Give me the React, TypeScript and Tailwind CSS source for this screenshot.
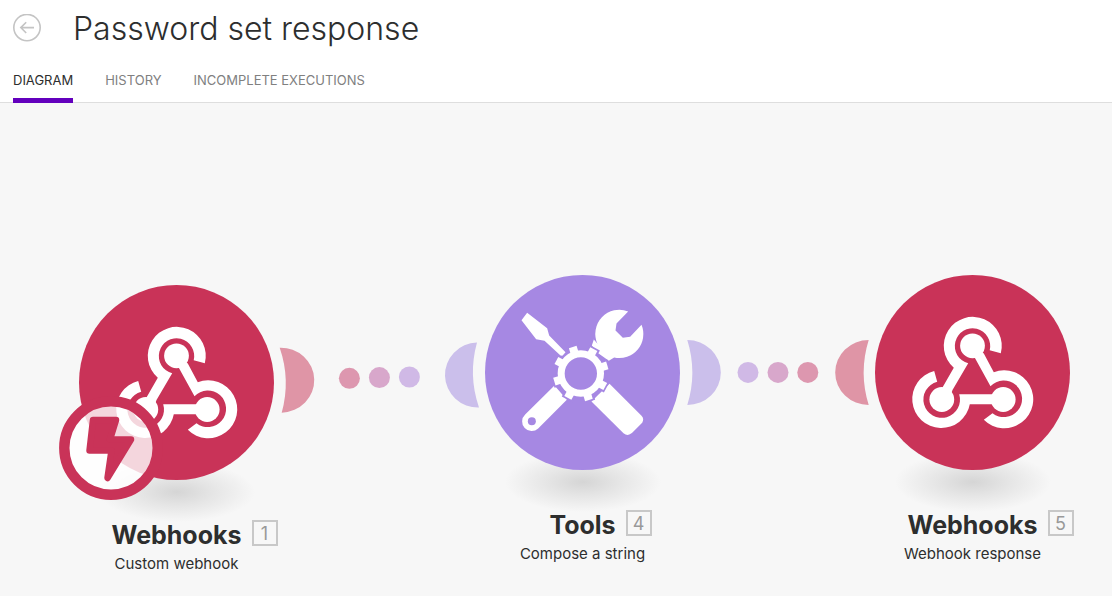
import type { ReactNode } from "react";

const tabs = ["Diagram", "History", "Incomplete executions"];

function WebhookIcon() {
  return (
    <svg viewBox="-97.5 -97.5 195 195" className="block size-full" aria-hidden="true">
      <circle r="97.5" fill="#c93358" />
      <g fill="#fff">
        <circle cx="0" cy="-26.7" r="12.4" />
        <circle cx="-30.7" cy="27" r="12.4" />
        <circle cx="30.7" cy="27" r="12.4" />
        <path d="M28.3 -19.2 A29 29 0 1 0 -18.7 -4.7 L-29.6 14.3 L-34 27 L-24 29 L-20 17.4 L-4.3 -9.3 A17.7 17.7 0 1 1 17.2 -22.2 Z" />
        <path d="M2.3 -14.7 L18 13.7 A18.3 18.3 0 1 1 20 40.7 L11.3 47.3 A29 29 0 1 0 21.3 -0.3 L11.3 -19 L2 -26 Z" />
        <path d="M30 21.7 L-13.3 21.7 A18.3 18.3 0 1 1 -35.3 9.3 L-38.3 -1.6 A29 29 0 1 0 -2.7 31.7 L30 31.7 Z" />
      </g>
    </svg>
  );
}

function ToolsIcon() {
  const teeth = [-107, -62, -17, 28, 73, 118, 163, 208];
  return (
    <svg viewBox="16.5 14.5 585 585" className="block size-full" aria-hidden="true">
      <circle cx="309" cy="307" r="292.5" fill="#a688e3" />
      <g fill="#fff">
        <path d="M143 128 L203 174 L209 196 L258 246 L249 257 L243 256 L195 212 L170 207 L126 150 Z" />
        <path d="M446 124 A72 72 0 0 0 354 221 L343 208 L337 226 L352 246 L388 272 L404 262 A72 72 0 0 0 486 164 L452 200 L430 203 L408 181 L411 160 Z" />
        <path d="M225 346 L137 433 A28 28 0 0 0 176 475 L262 389 Z" />
        <path d="M390 341 L486 437 Q495 446 488 458 L458 488 Q445 500 432 489 L336 394 Z" />
      </g>
      <circle cx="157" cy="453" r="12" fill="#a688e3" />
      <g stroke="#a688e3" strokeWidth="12" fill="#a688e3">
        <circle cx="304" cy="310" r="70" />
        {teeth.map((a) => (
          <rect key={a} x="360" y="298" width="26" height="24" transform={`rotate(${a} 304 310)`} />
        ))}
      </g>
      <circle cx="304" cy="310" r="59" fill="none" stroke="#fff" strokeWidth="21" />
      <g fill="#fff">
        {teeth.map((a) => (
          <rect key={a} x="366" y="298" width="21" height="24" transform={`rotate(${a} 304 310)`} />
        ))}
      </g>
    </svg>
  );
}

function InstantBadge() {
  return (
    <svg viewBox="0 0 104 104" className="absolute top-[111px] left-[-20px] size-[104px]" aria-hidden="true">
      <circle cx="52" cy="52" r="46.7" fill="#fff" fillOpacity="0.8" />
      <circle cx="52" cy="52" r="46.7" fill="none" stroke="#c93358" strokeWidth="10.4" />
      <path
        d="M34 24 H57 L51 43.5 H72 L48.5 82 L52.5 54.5 H30.5 Z"
        fill="#c93358"
        stroke="#c93358"
        strokeWidth="6.5"
        strokeLinejoin="round"
      />
    </svg>
  );
}

type ModuleProps = {
  name: string;
  action: string;
  order: number;
  place: string;
  icon: ReactNode;
  instant?: boolean;
};

function Module({ name, action, order, place, icon, instant }: ModuleProps) {
  return (
    <article className={`absolute flex w-[195px] flex-col items-center ${place}`}>
      <div className="absolute top-[177px] h-[60px] w-[156px] bg-[radial-gradient(closest-side,#d5d5d5,#e5e5e5_45%,#f7f7f7)]" />
      <button type="button" aria-label={`${name}: ${action}`} className="relative size-[195px] rounded-full">
        {icon}
        {instant && <InstantBadge />}
      </button>
      <h2 className="relative mt-10 text-[25px] leading-[30px] font-bold text-[#2d2e2e]">
        {name}
        <span className="absolute top-0 left-full ml-2.5 flex size-[26px] items-center justify-center border-2 border-[#c8c8c8] pt-0.5 text-lg leading-none font-normal text-[#999]">
          {order}
        </span>
      </h2>
      <p className="mt-1 text-[15px] leading-5 whitespace-nowrap text-[#2d2e2e]">{action}</p>
    </article>
  );
}

function Connections() {
  return (
    <svg viewBox="0 0 1112 493" className="absolute top-0 left-0 h-[493px] w-[1112px]" aria-hidden="true">
      <g transform="translate(0 -103)">
        <path d="M279.7 347.7 A33.5 32.5 0 1 1 281.7 412.7 A109.5 109.5 0 0 0 279.7 347.7 Z" fill="#df95a6" />
        <path d="M477 342.5 A33 32.5 0 1 0 479 407.5 A109.5 109.5 0 0 1 477 342.5 Z" fill="#cbbfeb" />
        <path d="M687.3 340 A33.5 32.5 0 1 1 687.3 405 A109.5 109.5 0 0 0 687.3 340 Z" fill="#cbbfeb" />
        <path d="M868.7 340 A33.5 32.5 0 1 0 868.7 405 A109.5 109.5 0 0 1 868.7 340 Z" fill="#df95a6" />
        <circle cx="349.4" cy="378.3" r="10.5" fill="#dd97af" />
        <circle cx="379.4" cy="377.6" r="10.5" fill="#d8a7cb" />
        <circle cx="409.4" cy="377" r="10.5" fill="#d0b9e6" />
        <circle cx="748" cy="372.4" r="10.5" fill="#d0b9e6" />
        <circle cx="778" cy="372.4" r="10.5" fill="#d8a7cb" />
        <circle cx="807.8" cy="372.4" r="10.5" fill="#dd97af" />
      </g>
    </svg>
  );
}

export default function App() {
  return (
    <div className="flex min-h-screen flex-col bg-[#f7f7f7] font-['Inter',sans-serif]">
      <header className="border-b border-[#dedede] bg-white px-[13px]">
        <div className="flex h-14 items-center gap-8">
          <button type="button" aria-label="Back" className="size-7 text-[#c4c4c4]">
            <svg viewBox="0 0 28 28" fill="none" stroke="currentColor" strokeWidth="1.6" className="block size-full">
              <circle cx="14" cy="13.6" r="13.2" />
              <path d="M21 13.6 H8 M13.2 8.2 L7.8 13.6 L13.2 19" />
            </svg>
          </button>
          <h1 className="pt-0.5 text-[32px] leading-10 font-light text-[#2d2e2e]">Password set response</h1>
        </div>
        <nav className="-mb-px flex gap-8">
          {tabs.map((tab, i) => (
            <a
              key={tab}
              href="#"
              aria-current={i === 0 ? "page" : undefined}
              className={`flex h-[47px] border-b-5 pt-3.5 text-[13px] leading-5 uppercase ${
                i === 0 ? "border-[#6300bd] text-[#2d2e2e]" : "border-transparent text-[#808080]"
              }`}
            >
              {tab}
            </a>
          ))}
        </nav>
      </header>
      <main className="relative min-h-[493px] flex-1 overflow-hidden">
        <Connections />
        <Module name="Webhooks" action="Custom webhook" order={1} place="left-[79px] top-[182px]" icon={<WebhookIcon />} instant />
        <Module name="Tools" action="Compose a string" order={4} place="left-[485px] top-[172px]" icon={<ToolsIcon />} />
        <Module name="Webhooks" action="Webhook response" order={5} place="left-[875px] top-[172px]" icon={<WebhookIcon />} />
      </main>
    </div>
  );
}
